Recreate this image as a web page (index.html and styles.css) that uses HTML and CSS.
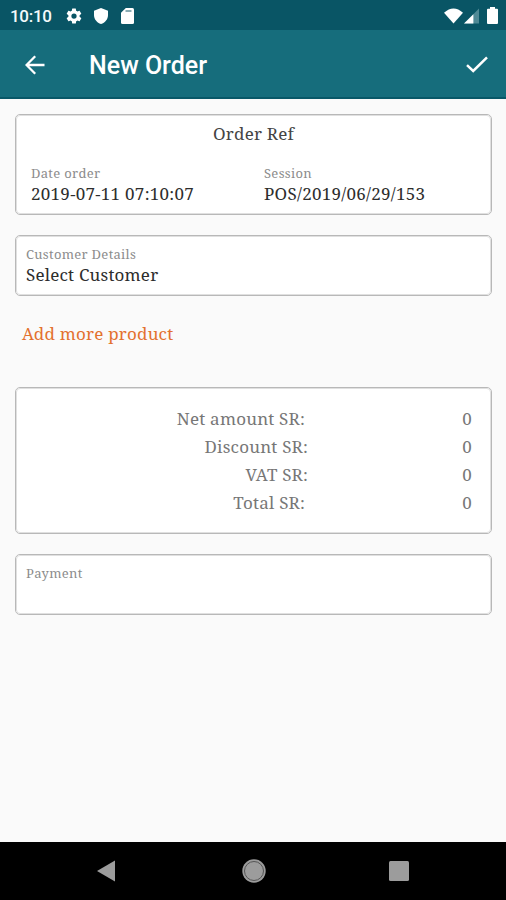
FILE: index.html
```html
<!DOCTYPE html>
<html lang="en">
<head>
<meta charset="utf-8">
<title>New Order</title>
<link rel="stylesheet" href="styles.css">
</head>
<body>
<div class="status">
  <span class="clock">10:10</span>
  <svg class="gear" width="18" height="18" viewBox="0 0 24 24"><path d="M19.4 13c0-.3.1-.6.1-1s0-.7-.1-1l2.100-1.650c.2-.15.250-.4.120-.64l-2-3.460c-.12-.22-.39-.3-.61-.22l-2.490 1c-.52-.4-1.080-.73-1.690-.98l-.38-2.650A.5.5 0 0 0 14 2h-4a.5.5 0 0 0-.49.420l-.38 2.650c-.61.250-1.170.590-1.690.980l-2.490-1c-.23-.09-.49 0-.61.220l-2 3.460c-.13.220-.07.490.120.640L4.570 11c-.04.320-.07.650-.07 1s.03.660.070 1l-2.110 1.650c-.19.150-.24.420-.12.640l2 3.460c.12.220.390.300.610.220l2.490-1c.52.400 1.080.730 1.690.980l.38 2.650c.03.240.240.420.490.420h4c.25 0 .46-.18.490-.42l.38-2.650c.61-.25 1.170-.59 1.690-.98l2.490 1c.23.090.490 0 .610-.22l2-3.460c.12-.22.070-.49-.12-.64L19.400 13zM12 15.500a3.500 3.500 0 1 1 0-7 3.500 3.500 0 0 1 0 7z"/></svg>
  <svg class="shield" width="14" height="16" viewBox="0 0 14 16"><path d="M7 0L14 2.800V7c0 4.300-2.900 7.700-7 9-4.100-1.300-7-4.700-7-9V2.800z"/></svg>
  <svg class="sd" width="13" height="16" viewBox="0 0 13 16"><path d="M4.800 0H11.500Q13 0 13 1.500V14.500Q13 16 11.500 16H1.500Q0 16 0 14.500V4.800z"/><path class="slot" d="M4.500 2h6v2h-6z"/></svg>
  <span class="space"></span>
  <svg width="19" height="16" viewBox="0 0 20 16"><path d="M0 4.500Q10-4.500 20 4.500L10 16z"/></svg>
  <svg class="signal" width="15" height="16" viewBox="0 0 16 16"><path class="faint" d="M16 0V16H0z"/><path d="M10 6V16H0z"/></svg>
  <svg class="battery" width="11" height="17" viewBox="0 0 11 17"><path d="M3 0h5v1.700h2q1 0 1 1V16q0 1-1 1H1q-1 0-1-1V2.700q0-1 1-1h2z"/></svg>
</div>
<header>
  <svg class="back" width="20" height="20" viewBox="0 0 20 20"><path d="M19.500 10H2M10.200 1.200L1.500 10l8.700 8.800"/></svg>
  <h1>New Order</h1>
  <svg class="check" width="22" height="17" viewBox="0 0 22 17"><path d="M1 9.200L7.200 15 21 1.300"/></svg>
</header>
<main>
  <section class="card order">
    <div class="ref">Order Ref</div>
    <div class="cols">
      <div><div class="label">Date order</div><div class="value">2019-07-11 07:10:07</div></div>
      <div><div class="label">Session</div><div class="value">POS/2019/06/29/153</div></div>
    </div>
  </section>
  <section class="card customer">
    <div class="label">Customer Details</div>
    <div class="value">Select Customer</div>
  </section>
  <a class="add">Add more product</a>
  <section class="card totals">
    <div class="row short"><span class="name">Net amount SR:</span><span>0</span></div>
    <div class="row"><span class="name">Discount SR:</span><span>0</span></div>
    <div class="row"><span class="name">VAT SR:</span><span>0</span></div>
    <div class="row short"><span class="name">Total SR:</span><span>0</span></div>
  </section>
  <section class="card payment"><div class="label">Payment</div></section>
</main>
<nav>
  <svg width="18" height="22" viewBox="0 0 18 22"><path d="M18 .5v21L0 11z"/></svg>
  <svg class="home" width="24" height="24" viewBox="0 0 24 24"><circle cx="12" cy="12" r="11.700"/><circle class="ring" cx="12" cy="12" r="9.500"/></svg>
  <svg width="20" height="20" viewBox="0 0 20 20"><rect width="20" height="20" rx="1.500"/></svg>
</nav>
</body>
</html>
```
FILE: styles.css
```css
* { box-sizing: border-box; }
body {
  margin: 0;
  height: 900px;
  display: flex;
  flex-direction: column;
  background: #fafafa;
  font-family: "Noto Serif", "Droid Serif", "DejaVu Serif Condensed", "DejaVu Serif", serif;
  overflow: hidden;
}
svg { display: block; flex: none; fill: #fff; }

.status { height: 30px; flex: none; background: #095565; display: flex; align-items: center; padding: 1px 8px 0 10px; }
.clock { width: 55px; font: 500 17px/30px Roboto, sans-serif; color: #f4fafb; letter-spacing: -.3px; }
.shield { margin-left: 11px; }
.sd { margin-left: 13px; }
.slot { fill: #8aabb3; }
.space { flex: 1; }
.signal { margin-left: 1px; }
.faint { fill: #4f8995; }
.battery { margin-left: 8px; }

header { height: 69px; flex: none; display: flex; align-items: center; background: #166d7c; border-bottom: 2px solid #095868; padding: 2px 18px 0 25px; }
.back { fill: none; stroke: #fff; stroke-width: 2.3; }
h1 { flex: 1; margin: 3px 0 0 44px; font: 500 25px/30px Roboto, sans-serif; color: #fff; }
.check { fill: none; stroke: #fff; stroke-width: 2.5; }

main { flex: 1; padding: 15px 14px 0 15px; letter-spacing: .2px; }
.card { background: #fff; border: 1px solid #b8b8b8; border-radius: 5px; outline: 1px solid #e0e0e0; outline-offset: -2px; }
.order { height: 101px; padding: 8px 15px; }
.ref { height: 42px; text-align: center; font-size: 17px; line-height: 22px; color: #444; }
.cols { display: grid; grid-template-columns: 233px 1fr; }
.label { font-size: 13px; line-height: 17px; letter-spacing: .3px; color: #8c8c8c; white-space: nowrap; }
.value { font-size: 17px; line-height: 24px; color: #2d2d2d; white-space: nowrap; }
.order .value { letter-spacing: .28px; }
.customer { height: 61px; margin-top: 20px; padding: 10px; }
.add { display: block; margin: 26px 0 0 7px; font-size: 17px; line-height: 24px; color: #e3712f; }
.totals { height: 147px; margin-top: 41px; padding: 17px 19px 0 18px; }
.row { display: flex; justify-content: space-between; height: 28px; font-size: 17px; line-height: 28px; color: #777; }
.name { width: 274px; text-align: right; }
.short .name { width: 271px; }
.payment { height: 61px; margin-top: 20px; padding: 10px; }

nav { height: 58px; flex: none; background: #000; display: flex; align-items: center; justify-content: space-between; padding: 0 97px; }
nav svg { fill: #9c9c9c; }
nav .home { margin-left: 3px; }
nav .ring { fill: none; stroke: #555; stroke-width: 1; }
```
